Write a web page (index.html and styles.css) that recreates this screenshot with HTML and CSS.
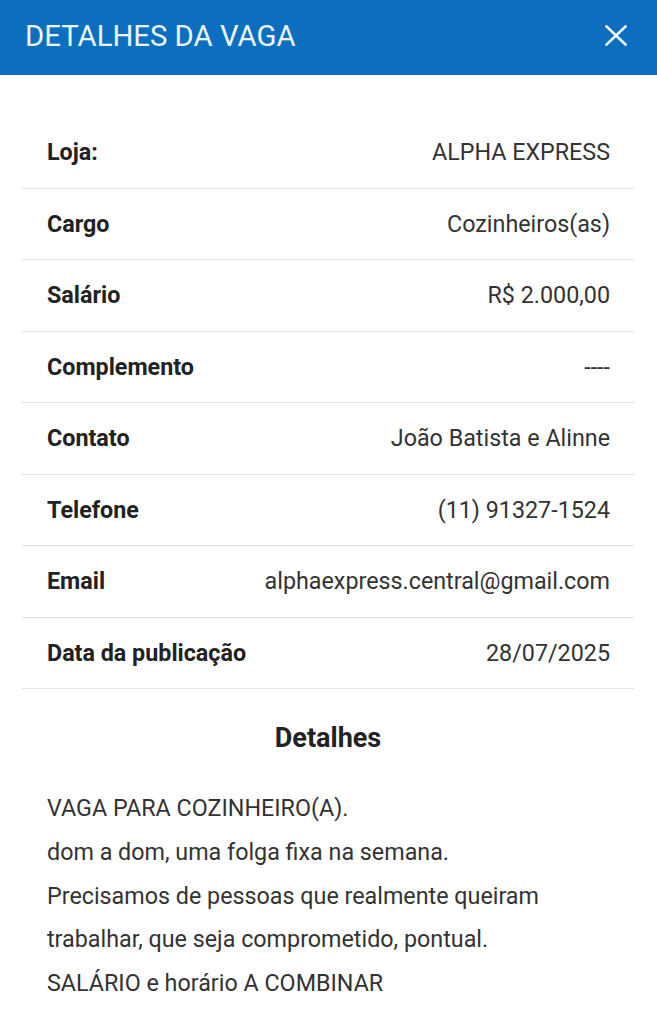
FILE: index.html
```html
<!DOCTYPE html>
<html>
<head>
<title>Detalhes da vaga</title>
<link rel="stylesheet" href="styles.css">
</head>
<body>

<div class="header">
  <div class="header-title">DETALHES DA VAGA</div>
  <div class="close">
    <svg width="22" height="21" viewBox="0 0 22 21">
      <path d="M1.5 1.5 L20.5 19.5 M20.5 1.5 L1.5 19.5" stroke="#f2f8ff" stroke-width="2.6" stroke-linecap="square"/>
    </svg>
  </div>
</div>

<div class="content">
  <div class="info">
    <div class="row"><span class="label">Loja:</span><span class="value">ALPHA EXPRESS</span></div>
    <div class="row"><span class="label">Cargo</span><span class="value">Cozinheiros(as)</span></div>
    <div class="row"><span class="label">Salário</span><span class="value">R$ 2.000,00</span></div>
    <div class="row"><span class="label">Complemento</span><span class="value">----</span></div>
    <div class="row"><span class="label">Contato</span><span class="value">João Batista e Alinne</span></div>
    <div class="row"><span class="label">Telefone</span><span class="value">(11) 91327-1524</span></div>
    <div class="row"><span class="label">Email</span><span class="value">alphaexpress.central@gmail.com</span></div>
    <div class="row"><span class="label">Data da publicação</span><span class="value">28/07/2025</span></div>
  </div>

  <h2 class="section-title">Detalhes</h2>

  <div class="description">
    <p>VAGA PARA COZINHEIRO(A).</p>
    <p>dom a dom, uma folga fixa na semana.</p>
    <p>Precisamos de pessoas que realmente queiram</p>
    <p>trabalhar, que seja comprometido, pontual.</p>
    <p>SALÁRIO e horário A COMBINAR</p>
  </div>
</div>

</body>
</html>
```

FILE: styles.css
```css
/* Reset */
* {
  margin: 0;
  padding: 0;
  box-sizing: border-box;
}

body {
  font-family: Roboto, 'Liberation Sans', sans-serif;
  background-color: #fff;
  color: #333;
}

/* Top bar */
.header {
  display: flex;
  align-items: center;
  justify-content: space-between;
  height: 75px;
  padding: 0 30px 4px 25px;
  background-color: #0b6ebe;
  color: #eef6ff;
}

.header-title {
  font-size: 29.3px;
  font-weight: 400;
}

.close {
  display: flex;
}

/* Info table */
.content {
  padding: 42px 23px 0 22px;
}

.row {
  display: flex;
  justify-content: space-between;
  align-items: center;
  height: 71.5px;
  padding: 0 24px 0 25px;
  border-bottom: 1px solid #e3e3e3;
  font-size: 23.3px;
}

.label {
  font-weight: 700;
  color: #222;
}

.value {
  color: #333;
}

/* Description */
.section-title {
  margin-top: 33px;
  text-align: center;
  font-size: 27px;
  font-weight: 700;
  line-height: 32px;
  color: #222;
}

.description {
  margin-top: 33px;
  padding-left: 25px;
  font-size: 23.3px;
  line-height: 43.8px;
  color: #333;
}
```
